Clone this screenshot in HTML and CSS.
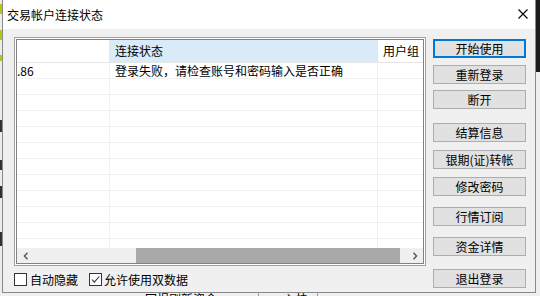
FILE: index.html
```html
<!DOCTYPE html>
<html lang="zh-CN">
<head>
<meta charset="utf-8">
<title>交易帐户连接状态</title>
<link rel="stylesheet" href="styles.css">
</head>
<body>
<div class="desktop">
  <div class="bg-left">
    <i class="mark m1"></i><i class="mark m2"></i><i class="mark m3"></i>
    <i class="dmark d1"></i><i class="dmark d2"></i><i class="dmark d3"></i><i class="dmark d4"></i>
  </div>
  <div class="bg-right"></div>
  <div class="bg-bottom">
    <span class="bt t1">回报刷新资金</span>
    <i class="sep s1"></i>
    <span class="bt t2">入快</span>
    <i class="sep s2"></i>
  </div>
</div>

<div class="window">
  <div class="titlebar">
    <span class="title">交易帐户连接状态</span>
    <svg class="close" viewBox="0 0 10 10" width="10" height="10"><path d="M0.5 0.5L9.5 9.5M9.5 0.5L0.5 9.5" stroke="#000" stroke-width="1.1" fill="none"/></svg>
  </div>
  <div class="client">
    <div class="left">
      <div class="listbox">
        <div class="listinner">
          <div class="header">
            <div class="hc c1"></div>
            <div class="hc c2">连接状态</div>
            <div class="hc c3">用户组</div>
          </div>
          <div class="rows">
            <div class="row"><div class="cell c1">.86</div><div class="cell c2">登录失败，请检查账号和密码输入是否正确</div><div class="cell c3"></div></div>
            <div class="row"><div class="cell c1"></div><div class="cell c2"></div><div class="cell c3"></div></div>
            <div class="row"><div class="cell c1"></div><div class="cell c2"></div><div class="cell c3"></div></div>
            <div class="row"><div class="cell c1"></div><div class="cell c2"></div><div class="cell c3"></div></div>
            <div class="row"><div class="cell c1"></div><div class="cell c2"></div><div class="cell c3"></div></div>
            <div class="row"><div class="cell c1"></div><div class="cell c2"></div><div class="cell c3"></div></div>
            <div class="row"><div class="cell c1"></div><div class="cell c2"></div><div class="cell c3"></div></div>
            <div class="row"><div class="cell c1"></div><div class="cell c2"></div><div class="cell c3"></div></div>
            <div class="row"><div class="cell c1"></div><div class="cell c2"></div><div class="cell c3"></div></div>
            <div class="row"><div class="cell c1"></div><div class="cell c2"></div><div class="cell c3"></div></div>
            <div class="row"><div class="cell c1"></div><div class="cell c2"></div><div class="cell c3"></div></div>
            <div class="row"><div class="cell c1"></div><div class="cell c2"></div><div class="cell c3"></div></div>
          </div>
          <div class="hscroll">
            <span class="arr"><svg viewBox="0 0 6 8" width="6" height="8"><path d="M4.5 0.8L1.5 4L4.5 7.2" stroke="#606060" stroke-width="1.6" fill="none"/></svg></span>
            <div class="track"><div class="thumb"></div></div>
            <span class="arr"><svg viewBox="0 0 6 8" width="6" height="8"><path d="M1.5 0.8L4.5 4L1.5 7.2" stroke="#606060" stroke-width="1.6" fill="none"/></svg></span>
          </div>
        </div>
      </div>
      <div class="checks">
        <span class="cb"></span><span class="lbl l1">自动隐藏</span>
        <span class="cb cb2"><svg viewBox="0 0 11 11" width="11" height="11"><path d="M2 5.5L4.3 8.2L9.3 2.5" stroke="#333" stroke-width="1.1" fill="none"/></svg></span><span class="lbl l2">允许使用双数据</span>
      </div>
    </div>
    <div class="buttons">
      <div class="btn default b1">开始使用</div>
      <div class="btn b2">重新登录</div>
      <div class="btn b3">断开</div>
      <div class="btn b4">结算信息</div>
      <div class="btn b5">银期(证)转帐</div>
      <div class="btn b6">修改密码</div>
      <div class="btn b7">行情订阅</div>
      <div class="btn b8">资金详情</div>
      <div class="btn b9">退出登录</div>
    </div>
  </div>
</div>
</body>
</html>
```
FILE: styles.css
```css
* { box-sizing: border-box; }
html, body { margin: 0; padding: 0; }
body {
  width: 540px;
  height: 296px;
  position: relative;
  overflow: hidden;
  background: #f0f0f0;
  font-family: "Noto Sans CJK SC", "Microsoft YaHei", sans-serif;
  font-size: 12px;
  color: #000;
}

/* backdrop application */
.desktop { position: absolute; inset: 0; }
.bg-left { position: absolute; left: 0; top: 0; width: 2px; height: 296px; background: #ececec; }
.mark { position: absolute; left: 0; width: 2px; background: #b7c614; }
.m1 { top: 4px; height: 10px; }
.m2 { top: 30px; height: 10px; }
.m3 { top: 55px; height: 6px; }
.dmark { position: absolute; left: 0; width: 2px; background: #333; }
.d1 { top: 120px; height: 12px; }
.d2 { top: 160px; height: 10px; }
.d3 { top: 186px; height: 12px; }
.d4 { top: 232px; height: 14px; }
.bg-right { position: absolute; right: 0; top: 0; width: 4px; height: 72px; background: #1c1c1c; }
.bg-bottom { position: absolute; left: 0; top: 292px; width: 540px; height: 4px; background: #f0f0f0; overflow: hidden; }
.bt { position: absolute; top: -1px; font-size: 12px; line-height: 16px; white-space: nowrap; }
.t1 { left: 145px; }
.t2 { left: 284px; }
.sep { position: absolute; top: 0; width: 1px; height: 4px; background: #a0a0a0; }
.s1 { left: 258px; }
.s2 { left: 317px; }

/* dialog window */
.window {
  position: absolute;
  left: 2px;
  top: 0;
  width: 534px;
  height: 293px;
  border: 1px solid #8a8a8a;
  border-top: none;
  background: #f0f0f0;
  display: flex;
  flex-direction: column;
}
.titlebar {
  height: 29px;
  flex: none;
  background: #fff;
  display: flex;
  align-items: center;
  padding-left: 4px;
}
.title { font-size: 12px; line-height: 16px; }
.close { margin-left: auto; margin-right: 7px; margin-top: -2px; display: block; }

.client { flex: 1; display: flex; padding: 8px 0 0 11px; }
.left { width: 412px; display: flex; flex-direction: column; }

.listbox {
  height: 229px;
  border: 1px solid #a0a0a0;
  padding: 1px;
  background: #fff;
}
.listinner {
  height: 100%;
  border: 1px solid #828282;
  display: flex;
  flex-direction: column;
  overflow: hidden;
  background: #fff;
}
.header { height: 23px; flex: none; display: flex; border-bottom: 1px solid #e5e5e5; }
.hc { height: 22px; line-height: 22px; white-space: nowrap; overflow: hidden; }
.hc.c1 { width: 93px; border-right: 1px solid #e5e5e5; }
.hc.c2 { width: 268px; padding-left: 5px; background: #d9ebf9; border-right: 1px solid #e5e5e5; }
.hc.c3 { flex: 1; padding-left: 5px; }

.rows { height: 185px; flex: none; overflow: hidden; }
.row { display: flex; height: 16px; border-bottom: 1px solid #f0f0f0; }
.cell { height: 15px; line-height: 15px; white-space: nowrap; overflow: hidden; }
.cell.c1 { width: 93px; border-right: 1px solid #f0f0f0; }
.cell.c2 { width: 268px; padding-left: 5px; border-right: 1px solid #f0f0f0; }
.cell.c3 { flex: 1; }

.hscroll { height: 15px; flex: none; display: flex; background: #f0f0f0; }
.arr { width: 17px; flex: none; display: flex; align-items: center; justify-content: center; }
.arr svg { display: block; }
.track { flex: 1; }
.thumb { margin-left: 102px; width: 264px; height: 15px; background: #a9a9a9; }

.checks { display: flex; align-items: center; margin-top: 7px; height: 13px; }
.cb { width: 13px; height: 13px; flex: none; border: 1px solid #333; background: #fff; display: flex; align-items: center; justify-content: center; }
.cb svg { display: block; }
.lbl { line-height: 14px; white-space: nowrap; }
.l1 { margin-left: 3px; margin-right: 11px; }
.l2 { margin-left: 2px; }

.buttons { margin-left: 7px; width: 93px; display: flex; flex-direction: column; }
.btn {
  height: 19px;
  flex: none;
  border: 1px solid #adadad;
  background: #e1e1e1;
  display: flex;
  align-items: center;
  justify-content: center;
  line-height: 14px;
  white-space: nowrap;
}
.btn.default { border: 2px solid #0078d7; }
.b1 { margin-top: 2px; }
.b2 { margin-top: 7px; }
.b3 { margin-top: 6px; }
.b4 { margin-top: 14px; }
.b5 { margin-top: 8px; }
.b6 { margin-top: 8px; }
.b7 { margin-top: 11px; }
.b8 { margin-top: 11px; }
.b9 { margin-top: 13px; }
```
